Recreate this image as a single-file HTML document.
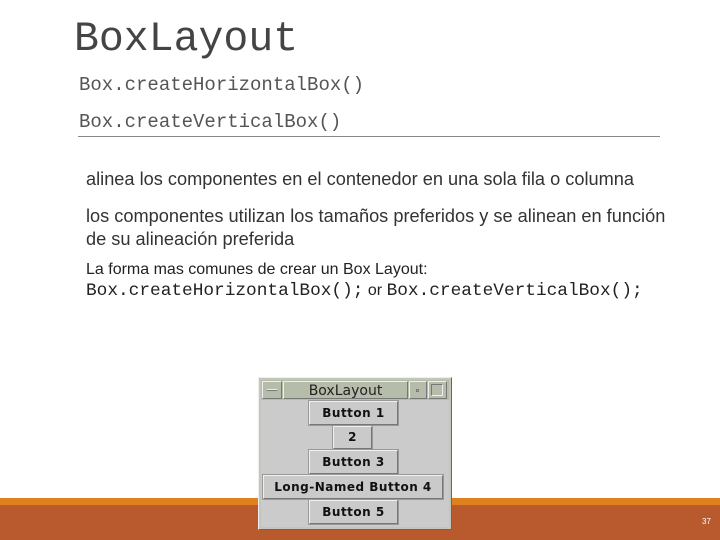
<!DOCTYPE html>
<html><head><meta charset="utf-8"><style>
*{margin:0;padding:0;box-sizing:border-box}
body{width:720px;height:540px;position:relative;background:#fff;overflow:hidden;font-family:"Liberation Sans",sans-serif;color:#333}
.a{position:absolute;white-space:nowrap}
.m{font-family:"Liberation Mono",monospace}
.btn{position:absolute;background:#cacaca;border:1px solid #f0f0f0;border-right-color:#777;border-bottom-color:#777;outline:1px solid #999;font:bold 12px "DejaVu Sans",sans-serif;color:#111;text-align:center;letter-spacing:.5px}
</style></head><body>
<div class="a m" style="left:74px;top:16px;font-size:41.5px;color:#444">BoxLayout</div>
<div class="a m" style="left:79px;top:74px;font-size:19px;color:#555">Box.createHorizontalBox()</div>
<div class="a m" style="left:79px;top:111px;font-size:19px;color:#555">Box.createVerticalBox()</div>
<div class="a" style="left:78px;top:136px;width:582px;height:1px;background:#888"></div>
<div class="a" style="left:86px;top:169px;font-size:18.2px;color:#333">alinea los componentes en el contenedor en una sola fila o columna</div>
<div class="a" style="left:86px;top:205px;font-size:18.2px;color:#333;line-height:23px">los componentes utilizan los tamaños preferidos y se alinean en función<br>de su alineación preferida</div>
<div class="a" style="left:86px;top:261px;font-size:16px;color:#222">La forma mas comunes de crear un Box Layout:</div>
<div class="a" style="left:86px;top:281px;font-size:16px;color:#222"><span class="m" style="font-size:17.8px">Box.createHorizontalBox();</span> or <span class="m" style="font-size:17.8px">Box.createVerticalBox();</span></div>

<div class="a" style="left:0;top:498px;width:720px;height:7px;background:#e0801e"></div>
<div class="a" style="left:0;top:505px;width:720px;height:35px;background:#b85a2e"></div>
<div class="a" style="left:702px;top:517px;font-size:8px;color:#fff">37</div>

<div class="a" style="left:258px;top:377px;width:194px;height:153px;background:#c4c6be;border:1px solid #eee;border-right-color:#666;border-bottom-color:#666"></div>
<div class="a" style="left:261px;top:380px;width:188px;height:20px;background:#b6bcaa"></div>
<div class="a" style="left:262px;top:381px;width:20px;height:18px;border:1px solid #eee;border-right-color:#777;border-bottom-color:#777"></div>
<div class="a" style="left:267px;top:389px;width:10px;height:2px;background:#eee;border-bottom:1px solid #777"></div>
<div class="a" style="left:283px;top:381px;width:125px;height:18px;border:1px solid #eee;border-right-color:#777;border-bottom-color:#777;font:14px 'DejaVu Sans',sans-serif;color:#222;text-align:center;line-height:18px">BoxLayout</div>
<div class="a" style="left:409px;top:381px;width:18px;height:18px;border:1px solid #eee;border-right-color:#777;border-bottom-color:#777"></div>
<div class="a" style="left:416px;top:389px;width:3px;height:3px;border:1px solid #777"></div>
<div class="a" style="left:428px;top:381px;width:19px;height:18px;border:1px solid #eee;border-right-color:#777;border-bottom-color:#777"></div>
<div class="a" style="left:431px;top:384px;width:12px;height:12px;border:1px solid #777;border-right-color:#eee;border-bottom-color:#eee"></div>
<div class="a" style="left:261px;top:400px;width:188px;height:127px;background:#cbcbcb"></div>
<div class="btn" style="left:309px;top:401px;width:89px;height:24px;line-height:22px">Button 1</div>
<div class="btn" style="left:333px;top:426px;width:39px;height:23px;line-height:21px">2</div>
<div class="btn" style="left:309px;top:450px;width:89px;height:24px;line-height:22px">Button 3</div>
<div class="btn" style="left:263px;top:475px;width:180px;height:24px;line-height:22px">Long-Named Button 4</div>
<div class="btn" style="left:309px;top:500px;width:89px;height:24px;line-height:22px">Button 5</div>
</body></html>
